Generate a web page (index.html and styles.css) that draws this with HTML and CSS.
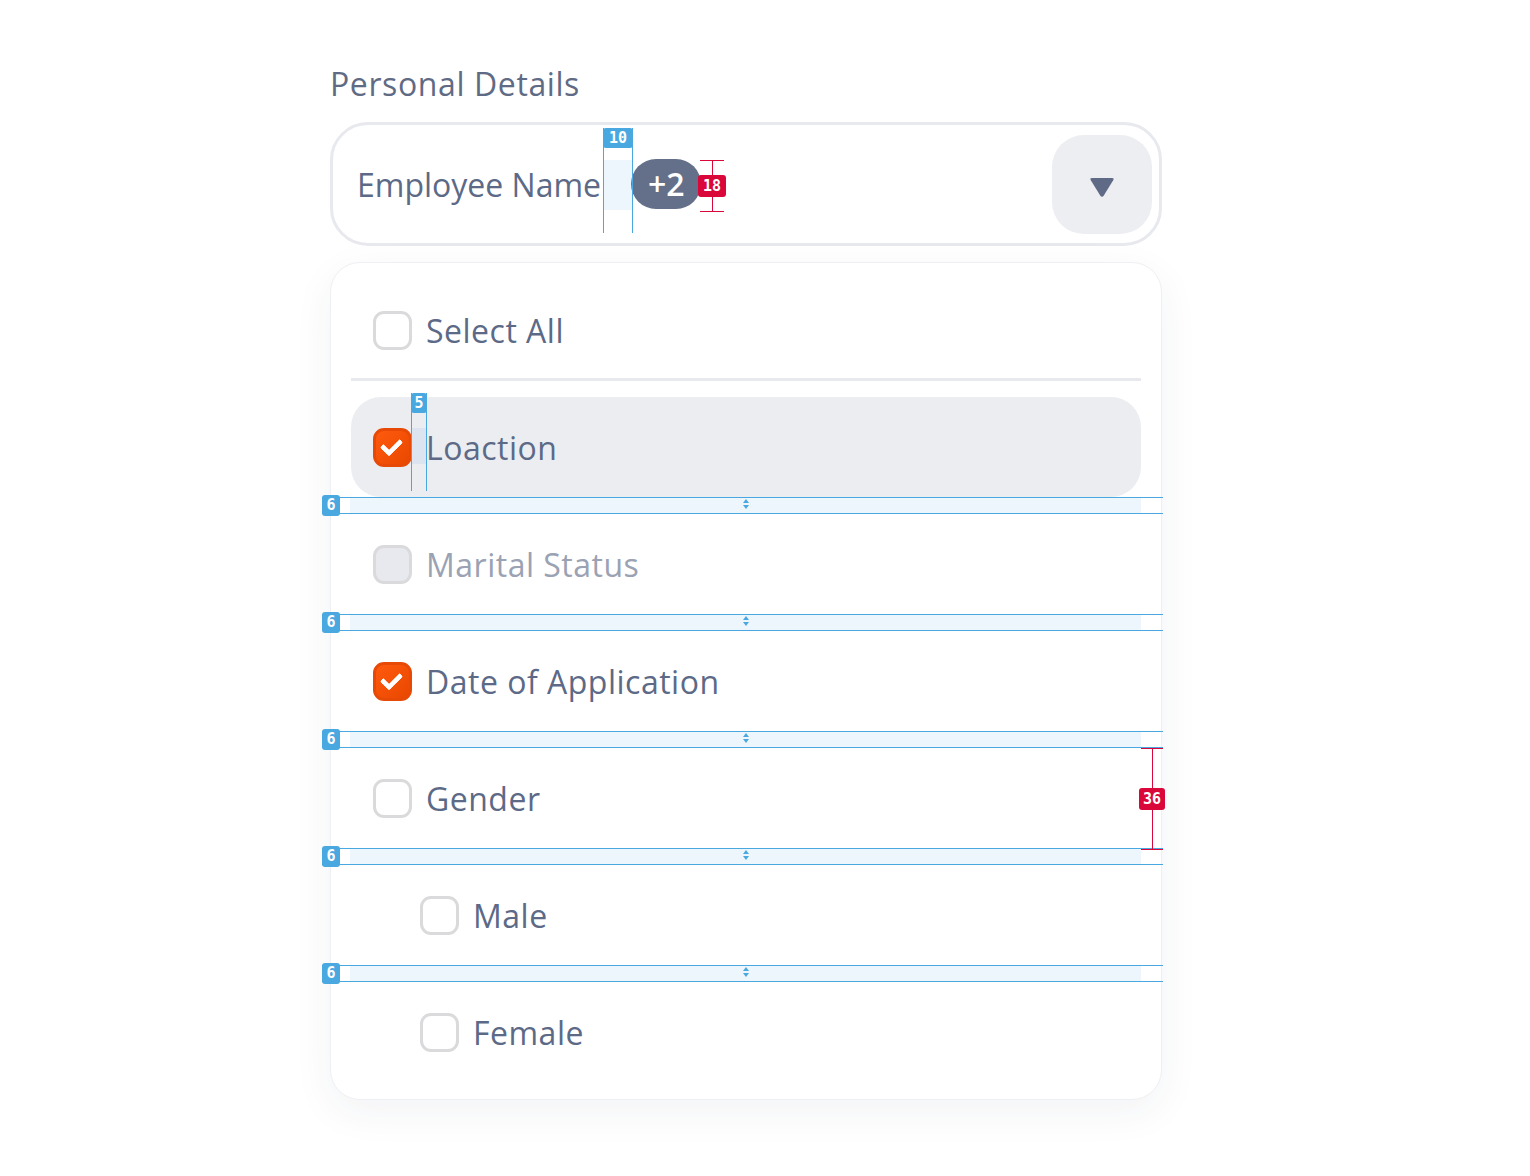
FILE: index.html
```html
<!doctype html>
<html lang="en">
<head>
    <meta charset="UTF-8">
    <title>Personal Details</title>
    <link rel="stylesheet" href="styles.css">
</head>
<body>

<div class="page">
    <h1 class="title">Personal Details</h1>

    <div class="select">
        <div class="select-value">
            <span>Employee Name</span>
            <span class="count">+2</span>
        </div>
        <button class="toggle">
            <svg width="26" height="22" viewBox="0 0 26 22">
                <path d="M3 2 L23 2 Q25.5 2 24.2 4.3 L14.8 19.5 Q13 22 11.2 19.5 L1.8 4.3 Q0.5 2 3 2 Z" fill="#5f6b86"/>
            </svg>
        </button>
    </div>

    <div class="panel">
        <div class="row head">
            <span class="box"></span>
            <span>Select All</span>
        </div>
        <div class="divider"></div>
        <div class="list">
            <div class="row active">
                <span class="box checked"></span>
                <span>Loaction</span>
            </div>
            <div class="row disabled">
                <span class="box"></span>
                <span>Marital Status</span>
            </div>
            <div class="row">
                <span class="box checked"></span>
                <span>Date of Application</span>
            </div>
            <div class="row">
                <span class="box"></span>
                <span>Gender</span>
            </div>
            <div class="row sub">
                <span class="box"></span>
                <span>Male</span>
            </div>
            <div class="row sub">
                <span class="box"></span>
                <span>Female</span>
            </div>
        </div>
    </div>
</div>

<!-- spacing annotations -->
<div class="gap-h" style="left:603px;top:128px;width:28px;height:105px;">
    <span class="tag">10</span>
    <span class="gap-fill" style="top:32px;height:50px;"></span>
</div>
<div class="gap-h" style="left:411px;top:393px;width:14px;height:98px;">
    <span class="tag">5</span>
    <span class="gap-fill" style="top:35px;height:36px;"></span>
</div>

<div class="gap-v" style="top:497px;"><span class="tag">6</span><span class="mark"></span></div>
<div class="gap-v" style="top:614px;"><span class="tag">6</span><span class="mark"></span></div>
<div class="gap-v" style="top:731px;"><span class="tag">6</span><span class="mark"></span></div>
<div class="gap-v" style="top:848px;"><span class="tag">6</span><span class="mark"></span></div>
<div class="gap-v" style="top:965px;"><span class="tag">6</span><span class="mark"></span></div>

<div class="size" style="left:700px;top:160px;width:24px;height:50px;"><span class="tag">18</span></div>
<div class="size" style="left:1141px;top:748px;width:22px;height:100px;"><span class="tag">36</span></div>

</body>
</html>
```

FILE: styles.css
```css
body {
    margin: 0;
    background: #fff;
    font-family: "Open Sans", sans-serif;
    color: #5c6a87;
    position: relative;
    min-height: 1176px;
}

.page {
    width: 832px;
    margin-left: 330px;
    padding-top: 64px;
}

.title {
    margin: 0 0 18px 0;
    font-size: 32px;
    font-weight: 400;
    letter-spacing: 0.6px;
    line-height: 40px;
    color: #5f6b85;
}

.select {
    height: 118px;
    border: 3px solid #e8e9ee;
    border-radius: 38px;
    display: flex;
    align-items: center;
    justify-content: space-between;
    padding: 0 7px 0 24px;
}

.select-value {
    display: flex;
    align-items: center;
    gap: 30px;
    font-size: 32px;
}

.count {
    background: #647089;
    color: #fff;
    font-weight: 600;
    height: 50px;
    line-height: 50px;
    padding: 0 16px 0 17px;
    border-radius: 25px;
}

.toggle {
    width: 100px;
    height: 99px;
    border: none;
    border-radius: 32px;
    background: #edeef2;
    display: flex;
    align-items: center;
    justify-content: center;
    padding: 0;
    padding-top: 6px;
}

.panel {
    margin-top: 16px;
    border: 1px solid #eff0f3;
    border-radius: 30px;
    background: #fff;
    box-shadow: 0 12px 40px rgba(40, 50, 80, 0.06);
    padding: 19px 20px 17px 20px;
}

.row {
    height: 100px;
    display: flex;
    align-items: center;
    gap: 14px;
    padding-left: 22px;
    border-radius: 30px;
    font-size: 32px;
    letter-spacing: 0.5px;
}

.row.head {
    height: 96px;
}

.divider {
    height: 3px;
    background: #e8e9ee;
    margin-bottom: 16px;
}

.list {
    display: flex;
    flex-direction: column;
    gap: 17px;
}

.row.active {
    background: #ecedf1;
}

.row.disabled {
    color: #9aa2b3;
}

.row.sub {
    padding-left: 69px;
}

.box {
    width: 33px;
    height: 33px;
    border: 3px solid #dadadd;
    border-radius: 11px;
    background: #fff;
    flex: none;
    position: relative;
}

.row.disabled .box {
    background: #e8e9ee;
}

.box.checked {
    border-color: #e64a06;
    background: linear-gradient(135deg, #ff5a0e, #e94800);
}

.box.checked::after {
    content: "";
    position: absolute;
    left: 9px;
    top: 4px;
    width: 8px;
    height: 15px;
    border: solid #fff;
    border-width: 0 5px 5px 0;
    border-radius: 2px;
    transform: rotate(45deg);
}

/* annotations */
.tag {
    position: absolute;
    font-family: "DejaVu Sans Mono", monospace;
    font-weight: bold;
    font-size: 15px;
    color: #fff;
    border-radius: 3px;
    text-align: center;
}

.gap-h {
    position: absolute;
    border-left: 1px solid #4aa8e0;
    border-right: 1px solid #4aa8e0;
}

.gap-h .tag {
    left: -1px;
    right: -1px;
    top: 0;
    height: 20px;
    line-height: 20px;
    background: #4aa8e0;
}

.gap-fill {
    position: absolute;
    left: 0;
    right: 0;
    background: rgba(74, 168, 224, 0.1);
}

.gap-v {
    position: absolute;
    left: 322px;
    width: 841px;
    height: 15px;
    border-top: 1px solid #4aa8e0;
    border-bottom: 1px solid #4aa8e0;
    background: linear-gradient(to right, transparent 28px, rgba(74, 168, 224, 0.1) 28px, rgba(74, 168, 224, 0.1) 819px, transparent 819px);
}

.gap-v .tag {
    left: 0;
    top: -3px;
    width: 18px;
    height: 21px;
    line-height: 21px;
    background: #4aa8e0;
}

.mark {
    position: absolute;
    left: 421px;
    top: 1px;
    width: 0;
    height: 0;
    border-left: 3px solid transparent;
    border-right: 3px solid transparent;
    border-bottom: 4px solid #4aa8e0;
}

.mark::after {
    content: "";
    position: absolute;
    left: -3px;
    top: 6px;
    border-left: 3px solid transparent;
    border-right: 3px solid transparent;
    border-top: 4px solid #4aa8e0;
}

.size {
    position: absolute;
    border-top: 1px solid #d9073a;
    border-bottom: 1px solid #d9073a;
}

.size::before {
    content: "";
    position: absolute;
    left: 50%;
    top: 0;
    bottom: 0;
    border-left: 1px solid #d9073a;
}

.size .tag {
    left: -2px;
    right: -2px;
    top: 50%;
    margin-top: -11px;
    height: 22px;
    line-height: 22px;
    background: #d9073a;
}
```
